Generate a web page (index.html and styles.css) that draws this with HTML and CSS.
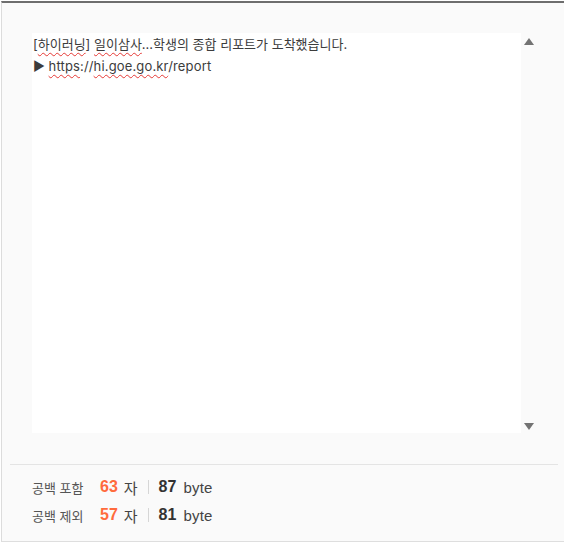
FILE: index.html
```html
<!DOCTYPE html>
<html lang="ko">
<head>
<meta charset="utf-8">
<link rel="stylesheet" href="styles.css">
</head>
<body>
<div class="panel">
  <div class="editor-wrap">
    <div class="editor">
      <div class="line">[<span class="sp">하이러닝</span>] <span class="sp">일이삼사</span>...학생의 종합 리포트가 도착했습니다.</div>
      <div class="line">▶ <span class="latin"><span class="sp">https</span>://<span class="sp">hi.goe.go.kr</span>/report</span></div>
    </div>
    <div class="scroll">
      <span class="arrow up"></span>
      <span class="arrow down"></span>
    </div>
  </div>
  <div class="sep"></div>
  <div class="stats">
    <div class="row">
      <span class="label">공백 포함</span>
      <span class="num accent">63</span>
      <span class="unit">자</span>
      <span class="bar"></span>
      <span class="num">87</span>
      <span class="unit byte">byte</span>
    </div>
    <div class="row">
      <span class="label">공백 제외</span>
      <span class="num accent">57</span>
      <span class="unit">자</span>
      <span class="bar"></span>
      <span class="num">81</span>
      <span class="unit byte">byte</span>
    </div>
  </div>
</div>
</body>
</html>
```
FILE: styles.css
```css
html, body {
  margin: 0;
  padding: 0;
  background: #ffffff;
}
body {
  padding-top: 1px;
  font-family: "Inter", "Noto Sans CJK KR", sans-serif;
}
.panel {
  background: #fafafa;
  border-top: 2px solid #6e6e6e;
  border-left: 1px solid #dcdcdc;
  border-bottom: 1px solid #dedede;
  height: 538px;
  margin-left: 1px;
  display: flex;
  flex-direction: column;
}
.editor-wrap {
  display: flex;
  padding: 30px 0 0 30px;
}
.editor {
  width: 489px;
  height: 400px;
  background: #ffffff;
  box-sizing: border-box;
  padding: 0 0 0 1px;
  font-size: 13px;
  line-height: 22px;
  color: #3c3c3c;
}
.latin {
  letter-spacing: 0.15px;
}
.sp {
  text-decoration: underline wavy #e53935;
  text-decoration-thickness: 1px;
  text-underline-offset: 3px;
}
.scroll {
  width: 15px;
  height: 400px;
  display: flex;
  flex-direction: column;
  justify-content: space-between;
  align-items: center;
  padding: 5px 0 3px;
  box-sizing: border-box;
}
.arrow {
  width: 0;
  height: 0;
  border-left: 5px solid transparent;
  border-right: 5px solid transparent;
}
.arrow.up {
  border-bottom: 7px solid #737373;
}
.arrow.down {
  border-top: 7px solid #737373;
}
.sep {
  height: 1px;
  background: #e4e4e4;
  margin: 31px 6px 0 8px;
}
.stats {
  padding: 8px 0 0 30px;
}
.row {
  display: flex;
  align-items: center;
  height: 28px;
  font-family: "Liberation Sans", "Noto Sans CJK KR", sans-serif;
  color: #333333;
}
.label {
  font-size: 13px;
  color: #555555;
  width: 68px;
}
.num {
  font-size: 16px;
  font-weight: bold;
  color: #333333;
}
.num.accent {
  color: #ff6a3c;
}
.unit {
  font-size: 15px;
  margin-left: 6px;
  color: #444444;
}
.unit.byte {
  margin-left: 7px;
  letter-spacing: 0.2px;
}
.bar {
  width: 1px;
  height: 14px;
  background: #d6d6d6;
  margin: 0 10px 0 10px;
}
```
